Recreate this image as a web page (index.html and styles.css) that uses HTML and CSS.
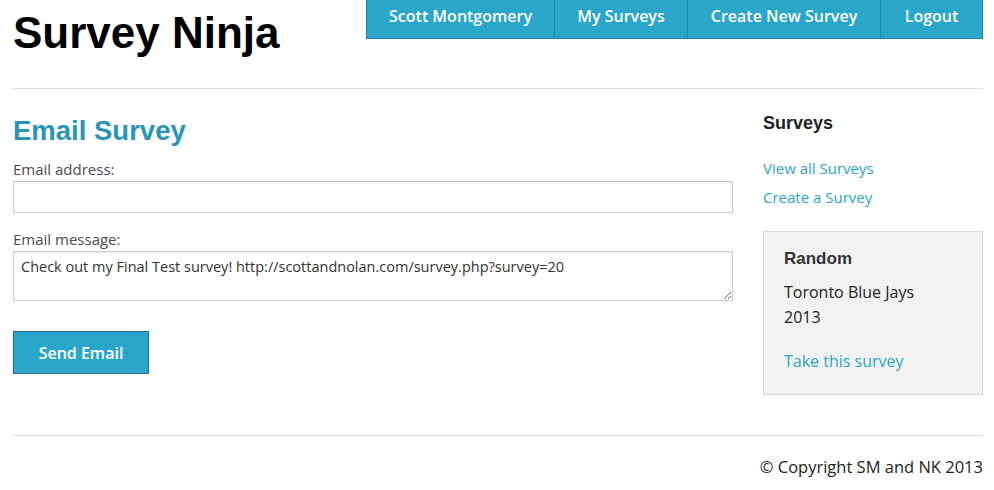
FILE: index.html
```html
<!DOCTYPE html>
<html>
<head>
<meta charset="utf-8">
<title>Survey Ninja</title>
<link rel="stylesheet" href="styles.css">
</head>
<body>
<div class="page">
  <header class="top">
    <h1 class="logo">Survey Ninja</h1>
    <nav class="nav">
      <a class="nav-item nav-user" href="#">Scott Montgomery</a>
      <a class="nav-item nav-my" href="#">My Surveys</a>
      <a class="nav-item nav-create" href="#">Create New Survey</a>
      <a class="nav-item nav-logout" href="#">Logout</a>
    </nav>
  </header>
  <hr class="rule">
  <div class="content">
    <main class="main">
      <h2 class="title">Email Survey</h2>
      <form class="form">
        <label class="label">Email address:</label>
        <input class="input" type="text">
        <label class="label label-msg">Email message:</label>
        <textarea class="textarea">Check out my Final Test survey! http://scottandnolan.com/survey.php?survey=20</textarea>
        <button class="btn" type="button">Send Email</button>
      </form>
    </main>
    <aside class="side">
      <h3 class="side-title">Surveys</h3>
      <ul class="side-links">
        <li><a href="#">View all Surveys</a></li>
        <li><a href="#">Create a Survey</a></li>
      </ul>
      <div class="panel">
        <h4 class="panel-title">Random</h4>
        <p class="panel-text">Toronto Blue Jays 2013</p>
        <a class="panel-link" href="#">Take this survey</a>
      </div>
    </aside>
  </div>
  <hr class="rule rule-foot">
  <footer class="foot">© Copyright SM and NK 2013</footer>
</div>
</body>
</html>
```
FILE: styles.css
```css
* { box-sizing: border-box; }
body {
  margin: 0;
  background: #fff;
  font-family: "Open Sans", "Noto Sans", sans-serif;
  color: #222;
}
a { color: #2ba6cb; text-decoration: none; }
.page {
  width: 970px;
  margin-left: 13px;
}
.top {
  display: flex;
  justify-content: space-between;
  align-items: flex-start;
  height: 88px;
}
.logo {
  margin: 5px 0 0;
  font-family: "Liberation Sans", Arial, sans-serif;
  font-weight: bold;
  font-size: 44px;
  line-height: 56px;
  color: #000;
}
.nav {
  display: flex;
  background: #2ba6cb;
  border: 1px solid #2284a1;
  border-top: none;
  height: 39px;
}
.nav-item {
  color: #fff;
  font-size: 16px;
  font-weight: 600;
  line-height: 32px;
  text-align: center;
  border-left: 1px solid #2284a1;
}
.nav-item:first-child { border-left: none; }
.nav-user { width: 187px; }
.nav-my { width: 133px; }
.nav-create { width: 193px; }
.nav-logout { width: 102px; }
.rule {
  margin: 0;
  border: none;
  border-top: 1px solid #ddd;
}
.content {
  display: flex;
  gap: 30px;
  height: 346px;
}
.main { width: 720px; }
.title {
  margin: 26px 0 0;
  font-family: "Liberation Sans", Arial, sans-serif;
  font-size: 27.5px;
  line-height: 32px;
  color: #2795b6;
}
.form { display: flex; flex-direction: column; align-items: flex-start; }
.label {
  margin-top: 11px;
  font-size: 15px;
  line-height: 23px;
  color: #4d4d4d;
}
.label-msg { margin-top: 15px; }
.input {
  width: 720px;
  height: 32px;
  margin-top: 0;
  border: 1px solid #ccc;
  box-shadow: inset 0 1px 2px rgba(0,0,0,0.1);
  background: #fff;
}
.textarea {
  width: 720px;
  height: 50px;
  padding: 5px 7px;
  border: 1px solid #ccc;
  box-shadow: inset 0 1px 2px rgba(0,0,0,0.1);
  font-family: "Open Sans", "Noto Sans", sans-serif;
  font-size: 14.5px;
  line-height: 20px;
  color: #333;
  resize: both;
}
.btn {
  margin-top: 30px;
  width: 136px;
  height: 43px;
  background: #2ba6cb;
  border: 1px solid #1e728c;
  color: #fff;
  font-family: "Open Sans", "Noto Sans", sans-serif;
  font-size: 16px;
  font-weight: 600;
}
.side { width: 220px; }
.side-title {
  margin: 22px 0 0;
  font-family: "Liberation Sans", Arial, sans-serif;
  font-size: 18px;
  line-height: 24px;
  color: #222;
}
.side-links {
  list-style: none;
  margin: 19px 0 0;
  padding: 0;
  font-size: 15px;
  line-height: 29px;
}
.panel {
  margin-top: 19px;
  background: #f2f2f2;
  border: 1px solid #d9d9d9;
  padding: 15px 20px 20px;
  height: 164px;
}
.panel-title {
  margin: 0;
  font-family: "Liberation Sans", Arial, sans-serif;
  font-size: 17px;
  line-height: 24px;
  color: #333;
}
.panel-text {
  margin: 9px 0 0;
  max-width: 160px;
  font-size: 16px;
  line-height: 25px;
  color: #222;
}
.panel-link {
  display: block;
  margin-top: 19px;
  font-size: 16px;
  line-height: 25px;
}
.rule-foot { margin-top: 0; }
.foot {
  text-align: right;
  font-size: 16.5px;
  line-height: 24px;
  padding-top: 19px;
  color: #222;
}
```
